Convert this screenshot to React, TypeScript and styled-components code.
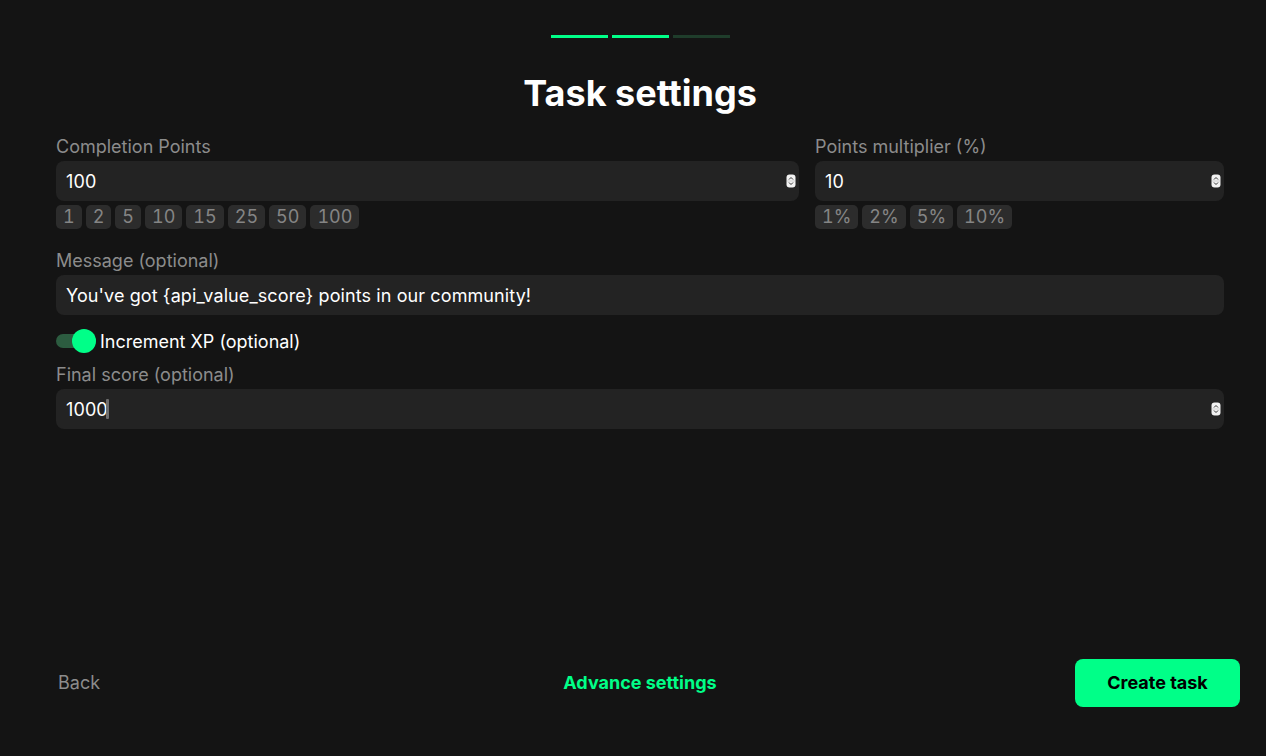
import React, { useState } from 'react'
import styled, { createGlobalStyle } from 'styled-components'

const GlobalStyle = createGlobalStyle`
	* { box-sizing: border-box; }
	html, body { margin: 0; padding: 0; background: #141414; }
	body { font-family: Inter, 'Noto Sans', sans-serif; color: #ffffff; }
`

const StyledPage = styled('div')`
	width: 1200px;
	height: 756px;
	margin-left: 40px;
	display: flex;
	flex-direction: column;
`

const Steps = styled('div')`
	display: flex;
	justify-content: center;
	gap: 4px;
	padding-top: 35px;
`

const Step = styled('div')<{ $active: boolean }>`
	width: 57px;
	height: 3px;
	background-color: ${(p) => (p.$active ? '#00ff88' : '#1f3d2b')};
`

const Title = styled('h1')`
	margin: 33px 0 0;
	text-align: center;
	font-size: 36px;
	font-weight: 700;
	line-height: 44px;
`

const Form = styled('div')`
	padding: 0 16px;
	display: flex;
	flex-direction: column;
`

const Row = styled('div')`
	display: grid;
	grid-template-columns: 743fr 409fr;
	gap: 16px;
	margin-top: 20px;
`

const Field = styled('div')<{ $top?: number }>`
	display: flex;
	flex-direction: column;
	margin-top: ${(p) => p.$top ?? 0}px;
`

const Label = styled('label')`
	font-size: 18px;
	line-height: 24px;
	color: #8c8c8c;
	margin-bottom: 2px;
`

const InputBox = styled('div')`
	position: relative;
	height: 40px;
	border-radius: 8px;
	background-color: #232323;
	display: flex;
	align-items: center;
`

const StyledInput = styled('input')`
	flex-grow: 1;
	height: 100%;
	padding: 0 10px;
	border: none;
	outline: none;
	background: transparent;
	color: #ffffff;
	font-family: inherit;
	font-size: 18px;
	letter-spacing: 0.1px;
	caret-color: transparent;
`

const Caret = styled('span')`
	position: absolute;
	left: 50px;
	top: 10px;
	width: 3px;
	height: 20px;
	border-radius: 1px;
	background-color: #6e6e6e;
	pointer-events: none;
`

const Spinner = styled('svg')`
	position: absolute;
	right: 2px;
	top: 13px;
`

const Chips = styled('div')`
	display: flex;
	gap: 4px;
	margin-top: 4px;
`

const Chip = styled('button')`
	height: 24px;
	padding: 0 7px;
	border: none;
	border-radius: 5px;
	background-color: #2c2c2c;
	color: #858585;
	font-family: inherit;
	font-size: 18px;
	font-variant-numeric: tabular-nums;
	line-height: 24px;
	cursor: pointer;
`

const ToggleRow = styled('div')`
	display: flex;
	align-items: center;
	margin-top: 14px;
	height: 24px;
	font-size: 18px;
`

const Track = styled('div')<{ $on: boolean }>`
	position: relative;
	width: 40px;
	height: 14px;
	border-radius: 7px;
	background-color: ${(p) => (p.$on ? '#2c5c40' : '#3a3a3a')};
	cursor: pointer;
`

const Knob = styled('div')<{ $on: boolean }>`
	position: absolute;
	top: -5px;
	left: ${(p) => (p.$on ? '16px' : '0')};
	width: 24px;
	height: 24px;
	border-radius: 50%;
	background-color: ${(p) => (p.$on ? '#00ff88' : '#888')};
`

const ToggleLabel = styled('span')`
	margin-left: 4px;
	color: #ffffff;
`

const Footer = styled('footer')`
	margin-top: auto;
	padding-bottom: 49px;
	display: grid;
	grid-template-columns: 1fr auto 1fr;
	align-items: center;
`

const LinkButton = styled('button')<{ $accent?: boolean }>`
	justify-self: ${(p) => (p.$accent ? 'center' : 'start')};
	background: none;
	border: none;
	padding: 0 18px 2px;
	font-family: inherit;
	font-size: 18px;
	font-weight: ${(p) => (p.$accent ? 700 : 400)};
	color: ${(p) => (p.$accent ? '#00ff88' : '#8c8c8c')};
	cursor: pointer;
`

const PrimaryButton = styled('button')`
	justify-self: end;
	width: 165px;
	height: 48px;
	padding-bottom: 2px;
	border: none;
	border-radius: 8px;
	background-color: #00ff88;
	color: #000000;
	font-family: inherit;
	font-size: 18px;
	font-weight: 700;
	cursor: pointer;
`

const SpinIcon: React.FC = () => (
	<Spinner width="11" height="14" viewBox="0 0 11 14">
		<rect x="0.5" y="0.5" width="9" height="13" rx="3" fill="#f2f2f2" />
		<path d="M3 5.5 L5 3.5 L7 5.5" stroke="#333" strokeWidth="1" fill="none" />
		<path d="M3 8.5 L5 10.5 L7 8.5" stroke="#333" strokeWidth="1" fill="none" />
		<line x1="1" y1="7" x2="9" y2="7" stroke="#bbb" strokeWidth="0.6" />
	</Spinner>
)

const NumberInput: React.FC<{ value: string; caret?: boolean }> = ({
	value,
	caret,
}) => {
	const [val, setVal] = useState(value)
	return (
		<InputBox>
			<StyledInput value={val} onChange={(e) => setVal(e.target.value)} />
			{caret && <Caret />}
			<SpinIcon />
		</InputBox>
	)
}

const App: React.FC = () => {
	const [xp, setXp] = useState(true)
	const [message, setMessage] = useState(
		"You've got {api_value_score} points in our community!",
	)

	return (
		<StyledPage>
			<GlobalStyle />
			<Steps>
				<Step $active />
				<Step $active />
				<Step $active={false} />
			</Steps>
			<Title>Task settings</Title>
			<Form>
				<Row>
					<Field>
						<Label>Completion Points</Label>
						<NumberInput value="100" />
						<Chips>
							{['1', '2', '5', '10', '15', '25', '50', '100'].map((c) => (
								<Chip key={c}>{c}</Chip>
							))}
						</Chips>
					</Field>
					<Field>
						<Label>Points multiplier (%)</Label>
						<NumberInput value="10" />
						<Chips>
							{['1%', '2%', '5%', '10%'].map((c) => (
								<Chip key={c}>{c}</Chip>
							))}
						</Chips>
					</Field>
				</Row>
				<Field $top={20}>
					<Label>Message (optional)</Label>
					<InputBox>
						<StyledInput
							value={message}
							onChange={(e) => setMessage(e.target.value)}
						/>
					</InputBox>
				</Field>
				<ToggleRow>
					<Track $on={xp} onClick={() => setXp(!xp)}>
						<Knob $on={xp} />
					</Track>
					<ToggleLabel>Increment XP (optional)</ToggleLabel>
				</ToggleRow>
				<Field $top={10}>
					<Label>Final score (optional)</Label>
					<NumberInput value="1000" caret />
				</Field>
			</Form>
			<Footer>
				<LinkButton>Back</LinkButton>
				<LinkButton $accent>Advance settings</LinkButton>
				<PrimaryButton>Create task</PrimaryButton>
			</Footer>
		</StyledPage>
	)
}

export default App
